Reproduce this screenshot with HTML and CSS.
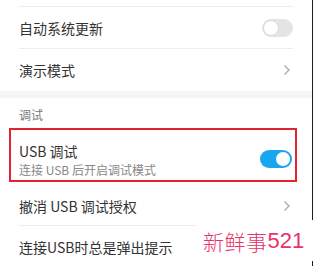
FILE: index.html
```html
<!DOCTYPE html>
<html lang="zh">
<head>
<meta charset="utf-8">
<link rel="stylesheet" href="styles.css">
</head>
<body>
<div class="page">
  <div class="screen">
    <div class="row-tail"></div>
    <div class="row">
      <span class="label">自动系统更新</span>
      <span class="switch"></span>
    </div>
    <div class="row last">
      <span class="label">演示模式</span>
      <svg class="chev" width="8" height="12" viewBox="0 0 8 12"><path d="M1.5 1.5 L6 6 L1.5 10.5" fill="none" stroke="#a8a8a8" stroke-width="1.3"/></svg>
    </div>
    <div class="band"></div>
    <div class="header">调试</div>
    <div class="row boxed">
      <div class="text">
        <div class="label">USB 调试</div>
        <div class="sub">连接 USB 后开启调试模式</div>
      </div>
      <span class="switch on"></span>
    </div>
    <div class="row r3">
      <span class="label">撤消 USB 调试授权</span>
      <svg class="chev" width="8" height="12" viewBox="0 0 8 12"><path d="M1.5 1.5 L6 6 L1.5 10.5" fill="none" stroke="#a8a8a8" stroke-width="1.3"/></svg>
    </div>
    <div class="row last">
      <span class="label">连接USB时总是弹出提示</span>
    </div>
  </div>
  <div class="edge"></div>
  <div class="watermark"><span class="wm-cn">新鲜事</span><span class="wm-num">521</span></div>
</div>
</body>
</html>
```
FILE: styles.css
```css
html, body {
  margin: 0;
  padding: 0;
  background: #fff;
}
body {
  font-family: "Noto Sans CJK SC", "Noto Sans", sans-serif;
  color: #333;
  width: 320px;
  height: 266px;
  overflow: hidden;
}
.page {
  position: relative;
  display: flex;
  height: 266px;
}
.screen {
  width: 312px;
  flex: none;
}
.edge {
  width: 1px;
  background: #1c1c1c;
  flex: none;
}
.row-tail {
  height: 6px;
  margin: 0 19px 0 19px;
  border-bottom: 1px solid #ececec;
}
.row {
  display: flex;
  align-items: center;
  justify-content: space-between;
  height: 41px;
  margin: 0 19px;
  border-bottom: 1px solid #ececec;
  font-size: 14px;
}
.row.last {
  border-bottom: none;
  height: 42px;
}
.row.r3 {
  height: 39px;
  padding-top: 4px;
}
.label {
  font-size: 14px;
  line-height: 20px;
  color: #333;
}
.band {
  height: 7px;
  background: #f5f5f5;
}
.header {
  padding: 8px 19px 4px;
  font-size: 12px;
  line-height: 18px;
  color: #777;
}
.row.boxed {
  height: auto;
  margin: 0 15px 0 9px;
  border: 2px solid #e5222f;
  padding: 11px 3px 1px 8px;
}
.sub {
  font-size: 12px;
  line-height: 18px;
  color: #888;
}
.switch {
  position: relative;
  width: 31px;
  height: 18px;
  border-radius: 9px;
  background: #e4e4e4;
  flex: none;
}
.switch::after {
  content: "";
  position: absolute;
  left: 1px;
  top: 1px;
  width: 14px;
  height: 14px;
  border-radius: 50%;
  background: #fff;
  border: 1px solid #dcdcdc;
}
.switch.on {
  width: 32px;
  background: #1aa6ee;
  margin-top: -2px;
}
.switch.on::after {
  left: auto;
  right: 2px;
  top: 2px;
  border: none;
}
.chev {
  margin-right: 2px;
}
.watermark {
  position: absolute;
  left: 196px;
  top: 220px;
  width: 122px;
  height: 41px;
  background: #fff;
  display: flex;
  align-items: center;
  padding-left: 7px;
  box-sizing: border-box;
  color: #e83268;
}
.wm-cn {
  font-size: 21px;
  letter-spacing: 0.5px;
  font-weight: 300;
}
.wm-num {
  font-family: "Liberation Sans", sans-serif;
  font-size: 22px;
}
```
